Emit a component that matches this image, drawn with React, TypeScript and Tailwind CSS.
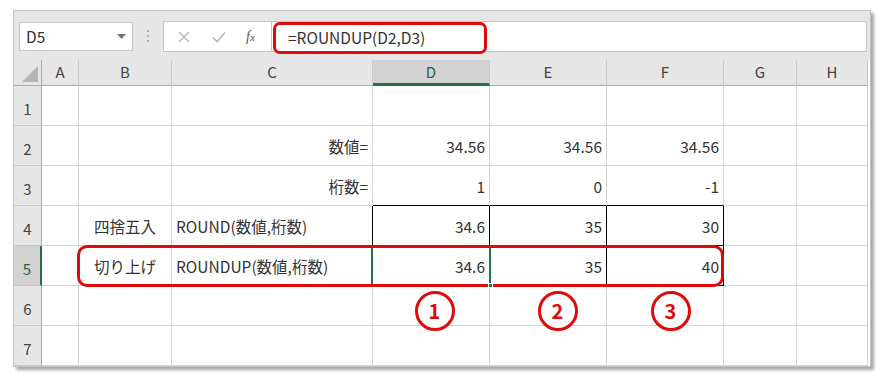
import type { ReactNode } from 'react'

const GREEN = '#217346'
const RED = '#e00a0a'

const colLetters = ['A', 'B', 'C', 'D', 'E', 'F', 'G', 'H']
const rowNums = [1, 2, 3, 4, 5, 6, 7]

type Cell = { text?: ReactNode; align?: 'left' | 'right' | 'center' }

const cells: Record<string, Cell> = {
  C2: { text: '数値=', align: 'right' },
  D2: { text: '34.56', align: 'right' },
  E2: { text: '34.56', align: 'right' },
  F2: { text: '34.56', align: 'right' },
  C3: { text: '桁数=', align: 'right' },
  D3: { text: '1', align: 'right' },
  E3: { text: '0', align: 'right' },
  F3: { text: '-1', align: 'right' },
  B4: { text: '四捨五入', align: 'center' },
  C4: { text: 'ROUND(数値,桁数)', align: 'left' },
  D4: { text: '34.6', align: 'right' },
  E4: { text: '35', align: 'right' },
  F4: { text: '30', align: 'right' },
  B5: { text: '切り上げ', align: 'center' },
  C5: { text: 'ROUNDUP(数値,桁数)', align: 'left' },
  D5: { text: '34.6', align: 'right' },
  E5: { text: '35', align: 'right' },
  F5: { text: '40', align: 'right' },
}

// circled markers under row 5
const markers: Record<string, { n: string; ml: string }> = {
  D6: { n: '1', ml: 'ml-[7px]' },
  E6: { n: '2', ml: 'ml-[19px]' },
  F6: { n: '3', ml: 'ml-[11px]' },
}

function borderFor(col: string, row: number) {
  const inBox = ['D', 'E', 'F'].includes(col) && (row === 4 || row === 5)
  const right = inBox || (col === 'C' && (row === 4 || row === 5)) ? 'border-r-black' : 'border-r-[#d4d4d4]'
  const bottom =
    inBox || (['D', 'E', 'F'].includes(col) && row === 3) ? 'border-b-black' : 'border-b-[#d4d4d4]'
  return `${right} ${bottom}`
}

function Circle({ n }: { n: string }) {
  return (
    <div
      className="relative z-10 flex h-[40px] w-[40px] items-center justify-center rounded-full border-[3px] bg-white text-[20px] font-bold leading-none"
      style={{ borderColor: RED, color: RED }}
    >
      {n}
    </div>
  )
}

export default function App() {
  return (
    <div className="h-[386px] w-[888px] bg-white font-['Noto_Sans_CJK_JP','Noto_Sans',sans-serif] text-[15px] text-[#333]">
      <div className="ml-[13px] pt-[10px]">
        <div className="w-[858px] border border-[#c4c4c4] bg-[#e6e6e6] shadow-[3px_3px_3px_rgba(0,0,0,0.35)]">
          {/* formula bar */}
          <div className="flex h-[49px] items-start pt-[10px]">
            <div className="ml-[5px] mt-[1px] flex h-[29px] w-[114px] items-center justify-between border border-[#c6c6c6] bg-white pl-[6px] pr-[6px]">
              <span className="text-[15.5px] text-[#333]">D5</span>
              <svg width="9" height="5" viewBox="0 0 9 5">
                <path d="M0 0h9L4.5 5z" fill="#777" />
              </svg>
            </div>
            <div className="ml-[13px] mt-[9px] flex w-[4px] flex-col items-center gap-[3px]">
              <span className="h-[2px] w-[2px] bg-[#b0b0b0]" />
              <span className="h-[2px] w-[2px] bg-[#b0b0b0]" />
              <span className="h-[2px] w-[2px] bg-[#b0b0b0]" />
            </div>
            <div className="ml-[13px] flex h-[31px] flex-1 items-start border border-[#c6c6c6] bg-white">
              <div className="flex h-full w-[108px] items-center border-r border-[#c6c6c6]">
                <svg className="ml-[14px]" width="12" height="12" viewBox="0 0 12 12">
                  <path d="M1 1l10 10M11 1L1 11" stroke="#b5b5b5" strokeWidth="1.4" />
                </svg>
                <svg className="ml-[22px]" width="14" height="12" viewBox="0 0 14 12">
                  <path d="M1 6.5l4 4L13 1.5" stroke="#b5b5b5" strokeWidth="1.6" fill="none" />
                </svg>
                <span className="ml-[20px] font-['Liberation_Serif',serif] text-[14px] italic text-[#555]">
                  f<span className="text-[11px]">x</span>
                </span>
              </div>
              <div
                className="ml-[1px] flex h-[32px] w-[214px] items-center rounded-[7px] border-[3px] pl-[12px] text-[15.5px] text-[#333]"
                style={{ borderColor: RED }}
              >
                =ROUNDUP(D2,D3)
              </div>
            </div>
            <div className="w-[3px]" />
          </div>

          {/* grid */}
          <div className="relative grid grid-cols-[28px_37px_93px_201px_117px_117px_117px_73px_71px] grid-rows-[26px_repeat(7,40px)] bg-white">
            {/* corner */}
            <div className="flex items-end justify-end border-b border-r border-[#ababab] bg-[#e6e6e6] pb-[3px] pr-[3px]">
              <svg width="16" height="16" viewBox="0 0 16 16">
                <path d="M16 0v16H0z" fill="#b4b4b4" />
              </svg>
            </div>
            {colLetters.map((c) => (
              <div
                key={c}
                className={
                  c === 'D'
                    ? 'flex items-center justify-center border-b-[3px] border-r border-b-[#217346] border-r-[#c8c8c8] bg-[#d2d2d2] pt-[2px] text-[#2b5d48]'
                    : 'flex items-center justify-center border-b border-r border-b-[#ababab] border-r-[#c8c8c8] bg-[#e6e6e6] text-[#444]'
                }
              >
                {c}
              </div>
            ))}

            {rowNums.map((r) => (
              <Row key={r} r={r} />
            ))}

            {/* red highlight around row 5 */}
            <div
              className="pointer-events-none absolute left-[63px] top-[185px] z-20 h-[42px] w-[647px] rounded-[10px] border-[3px]"
              style={{ borderColor: RED }}
            />
          </div>
        </div>
      </div>
    </div>
  )
}

function Row({ r }: { r: number }) {
  const selected = r === 5
  return (
    <>
      <div
        className={
          selected
            ? 'flex items-end justify-center border-b border-r-2 border-b-[#c8c8c8] bg-[#d2d2d2] pb-[5px] text-[#2b5d48]'
            : 'flex items-end justify-center border-b border-r border-b-[#c8c8c8] border-r-[#ababab] bg-[#e6e6e6] pb-[5px] text-[#444]'
        }
        style={selected ? { borderRightColor: GREEN } : undefined}
      >
        {r}
      </div>
      {colLetters.map((c) => {
        const key = `${c}${r}`
        const cell = cells[key]
        const marker = markers[key]
        const justify =
          cell?.align === 'right' ? 'justify-end pr-[4px]' : cell?.align === 'center' ? 'justify-center' : 'justify-start pl-[4px]'
        return (
          <div
            key={key}
            className={`relative flex border-b border-r ${borderFor(c, r)} ${
              marker ? 'items-start pt-[5px]' : `items-end pb-[9px] ${justify}`
            }`}
          >
            {cell && <span className="whitespace-nowrap text-[15.5px] leading-[20px]">{cell.text}</span>}
            {marker && (
              <div className={`${marker.ml} flex w-full justify-center`}>
                <Circle n={marker.n} />
              </div>
            )}
            {key === 'D5' && (
              <>
                <div
                  className="pointer-events-none absolute -left-[2px] -top-[1px] bottom-[-1px] right-[-2px] z-10 border-2"
                  style={{ borderColor: GREEN }}
                />
                <div className="absolute -bottom-[3px] -right-[4px] z-30 h-[5px] w-[5px] border border-white bg-[#217346]" />
              </>
            )}
          </div>
        )
      })}
    </>
  )
}
